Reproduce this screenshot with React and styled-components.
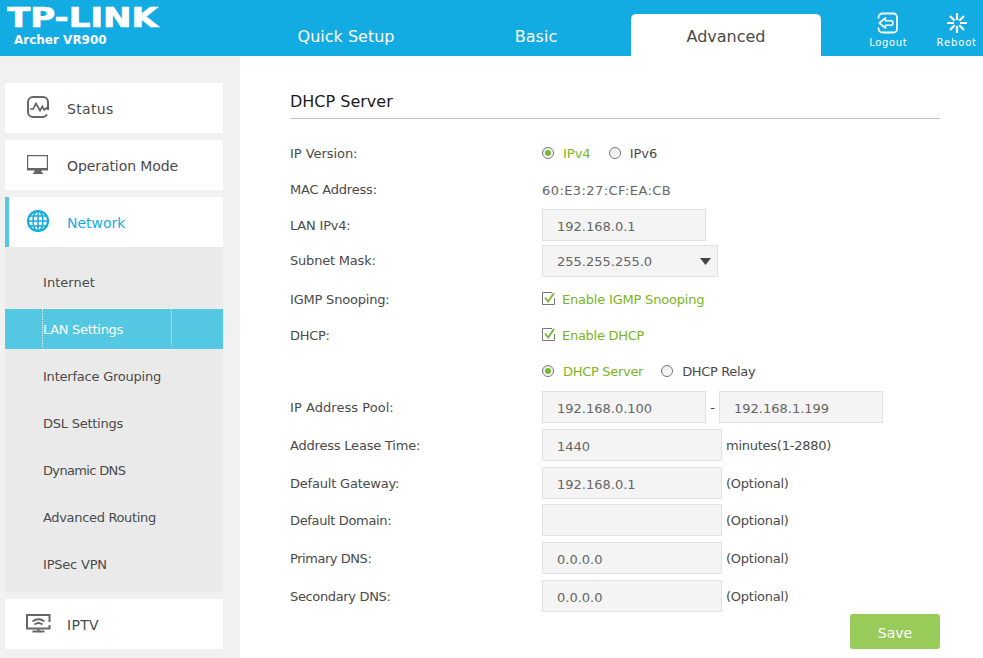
import React from "react";
import styled, { createGlobalStyle } from "styled-components";

const Global = createGlobalStyle`
  * { box-sizing: border-box; }
  body {
    margin: 0;
    background: #fff;
    color: #4a4a4a;
    font: 13px/20px Verdana, "DejaVu Sans", sans-serif;
    overflow: hidden;
  }
  svg { display: block; flex: none; }
`;

const Page = styled.div`
  width: 983px;
  height: 658px;
  display: flex;
  flex-direction: column;
  overflow: hidden;
`;

const Header = styled.header`
  height: 56px;
  flex: none;
  display: flex;
  background: #12abe2;
  color: #fff;
`;

const Brand = styled.div`
  width: 251px;
  flex: none;
  padding-left: 7px;
`;

const Model = styled.div`
  margin: -6px 0 0 7px;
  font-size: 12px;
  line-height: 20px;
  font-weight: bold;
  white-space: nowrap;
`;

const Tabs = styled.nav`
  display: flex;
  flex: none;
  align-items: flex-end;
`;

const Tab = styled.a`
  width: 190px;
  height: 42px;
  line-height: 45px;
  text-align: center;
  font-size: 16px;
  border-radius: 5px 5px 0 0;
  background: ${(p) => (p.$active ? "#fff" : "transparent")};
  color: ${(p) => (p.$active ? "#4a4a4a" : "#fff")};
`;

const Actions = styled.div`
  display: flex;
  flex: none;
  margin-left: 33px;
`;

const Action = styled.a`
  width: 68.5px;
  display: flex;
  flex-direction: column;
  align-items: center;
  padding-top: 12px;
  font-size: 10px;
  line-height: 14px;
  letter-spacing: ${(p) => p.$ls || 0}px;
  svg { margin-bottom: 2px; }
`;

const Body = styled.div`
  flex: 1;
  min-height: 0;
  display: flex;
`;

const Sidebar = styled.aside`
  width: 240px;
  flex: none;
  padding: 27px 17px 0 5px;
  display: flex;
  flex-direction: column;
  gap: 7px;
  background: #f1f1f1;
`;

const MenuItem = styled.a`
  height: 50px;
  flex: none;
  display: flex;
  align-items: center;
  padding-left: ${(p) => (p.$active ? 17 : 21)}px;
  border-left: ${(p) => (p.$active ? "4px solid #54c7e2" : "0")};
  background: #fff;
  color: ${(p) => (p.$active ? "#12abe2" : "#4a4a4a")};
  font-size: 14px;
`;

const MenuIcon = styled.span`
  width: 41px;
  height: 26px;
`;

const MenuText = styled.span`
  padding-top: 2px;
  letter-spacing: ${(p) => p.$ls || 0}px;
`;

const SubMenu = styled.div`
  margin-top: -7px;
  padding: 15px 0 8px;
  display: flex;
  flex-direction: column;
  gap: 7px;
  background: #eaeaea;
`;

const SubItem = styled.div`
  height: 40px;
  padding-left: 38px;
  background: ${(p) => (p.$active ? "#54c7e2" : "transparent")};
  color: ${(p) => (p.$active ? "#fff" : "#4a4a4a")};
`;

const SubLink = styled.a`
  display: block;
  width: 128px;
  height: 40px;
  line-height: 41px;
  white-space: nowrap;
  letter-spacing: ${(p) => p.$ls || 0}px;
  outline: ${(p) => (p.$active ? "1px dotted #fff" : "none")};
`;

const Main = styled.main`
  width: 700px;
  padding: 32px 0 0 50px;
  display: flex;
  flex-direction: column;
`;

const Title = styled.h1`
  margin: 0 0 18px;
  height: 31px;
  border-bottom: 1px solid #c4c4c4;
  color: #1c1c1c;
  font-size: 16px;
  line-height: 27px;
  font-weight: normal;
`;

const Row = styled.div`
  height: 32px;
  flex: none;
  display: flex;
  align-items: center;
  margin-bottom: ${(p) => p.$gap ?? 4}px;
`;

const Label = styled.span`
  width: 252px;
  flex: none;
  padding-top: ${(p) => p.$top ?? 2}px;
  letter-spacing: ${(p) => p.$ls ?? -0.2}px;
`;

const Value = styled.span`
  padding-top: 4px;
  color: #666;
  letter-spacing: 0.43px;
`;

const Note = styled.span`
  margin-left: 4px;
  padding-top: 2px;
  letter-spacing: -0.25px;
`;

const Dash = styled.span`
  width: 13px;
  padding-top: 2px;
  text-align: center;
`;

const Field = styled.input`
  width: ${(p) => p.$w || 180}px;
  height: 32px;
  padding: 3px 14px 0;
  border: 1px solid #e2e2e2;
  border-radius: 0;
  background: #f4f4f4;
  color: #666;
  font: inherit;
  outline: none;
`;

const Select = styled.div`
  width: 176px;
  height: 32px;
  display: flex;
  align-items: center;
  justify-content: space-between;
  padding: 1px 6px 0 14px;
  border: 1px solid #e2e2e2;
  background: #f4f4f4;
  color: #666;
`;

const Option = styled.label`
  display: flex;
  align-items: center;
  gap: ${(p) => (p.$check ? 7 : 9)}px;
  margin-right: 18px;
  color: ${(p) => (p.$on ? "#7ab51d" : "#4a4a4a")};
`;

const OptionText = styled.span`
  padding-top: 2px;
  letter-spacing: ${(p) => p.$ls || 0}px;
`;

const RadioMark = styled.span`
  width: 12px;
  height: 12px;
  display: grid;
  place-items: center;
  border: 1px solid #777;
  border-radius: 50%;
  background: linear-gradient(135deg, #e8e8e8, #fff);
  &::after {
    content: "";
    width: 6px;
    height: 6px;
    border-radius: 50%;
    background: ${(p) => (p.$on ? "#78b832" : "transparent")};
  }
`;

const Save = styled.button`
  width: 90px;
  height: 35px;
  flex: none;
  align-self: flex-end;
  margin: -4px 0 0;
  padding: 3px 0 0;
  border: 0;
  border-radius: 3px;
  background: #98cb5a;
  color: #fff;
  font: 14px Verdana, "DejaVu Sans", sans-serif;
`;

const Logo = () => (
  <svg width="164" height="36" viewBox="0 0 164 36">
    <text
      x="0"
      y="27"
      textLength="151"
      lengthAdjust="spacingAndGlyphs"
      fontFamily="DejaVu Sans"
      fontWeight="bold"
      fontSize="26"
      fill="#fff"
      stroke="#fff"
      strokeWidth="0.7"
    >
      TP-LINK
    </text>
  </svg>
);

const LogoutIcon = () => (
  <svg width="22" height="22" viewBox="0 0 22 22" fill="none" stroke="#fff" strokeWidth="1.8">
    <path d="M1.500 6.500V5.500a4 4 0 0 1 4-4h11A3.500 3.500 0 0 1 20 5v12a3.500 3.500 0 0 1-3.500 3.500h-11a4 4 0 0 1-4-4v-1" />
    <path d="M2.200 11 8.500 6v2.700h4.800a2.300 2.300 0 0 1 2.700 2.300 2.300 2.300 0 0 1-2.700 2.300H8.500V16z" strokeWidth="1.600" strokeLinejoin="round" />
  </svg>
);

const RebootIcon = () => (
  <svg width="22" height="22" viewBox="0 0 22 22" stroke="#fff" strokeWidth="2.200">
    <path d="M11 1v7M11 14v7M1 11h7M14 11h7M4 4l4.700 4.700M13.300 13.300 18 18M18 4l-4.700 4.700M8.700 13.300 4 18" />
  </svg>
);

const StatusIcon = () => (
  <svg width="24" height="24" viewBox="0 0 24 24" fill="none" stroke="#666" strokeWidth="2">
    <path d="M22 15V7a5 5 0 0 0-5-5H7a5 5 0 0 0-5 5v10a5 5 0 0 0 5 5h10a5 5 0 0 0 4-2.500" />
    <path d="M4 14h3.200L10 8.500l4 7 2.300-4 2 3.500 2.900-2.500" strokeWidth="1.700" />
  </svg>
);

const MonitorIcon = () => (
  <svg width="24" height="24" viewBox="0 0 24 24">
    <path fill="#666" fillRule="evenodd" d="M1 3h21v15.500h-6.500v2h1.500V22H7v-1.500h1.500v-2H1zm1.200 1.200V16h18.600V4.200z" />
  </svg>
);

const GlobeIcon = () => (
  <svg width="24" height="24" viewBox="0 0 24 24" fill="none" stroke="#12abe2" strokeWidth="1.500">
    <circle cx="12" cy="12" r="10" strokeWidth="2.200" />
    <ellipse cx="12" cy="12" rx="5" ry="10" />
    <path d="M12 2v20M2 12h20M4 7h16M4 17h16" />
  </svg>
);

const IptvIcon = () => (
  <svg width="25" height="24" viewBox="0 0 25 24" fill="none" stroke="#666" strokeWidth="2">
    <path d="M23.500 11V4H1v13.500h22.500v-3.500M12.500 17.500v3M6.500 20.500h12" />
    <path d="M6.500 10.500q6-4.500 12 0M8.500 13.500q4-3 8 0" strokeWidth="1.800" />
  </svg>
);

const CheckMark = () => (
  <svg width="13" height="15" viewBox="0 0 13 15" fill="none">
    <path d="M10 .5H.5v12h12V6" stroke="#777" />
    <path d="m3 5.500 3.200 4L12 1" stroke="#78b832" strokeWidth="1.900" />
  </svg>
);

const Arrow = () => (
  <svg width="11" height="7" viewBox="0 0 11 7">
    <path d="M0 0h11L5.500 7z" fill="#444" />
  </svg>
);

const Radio = ({ on, ls, children }) => (
  <Option $on={on}>
    <RadioMark $on={on} />
    <OptionText $ls={ls}>{children}</OptionText>
  </Option>
);

const Check = ({ ls, children }) => (
  <Option $on $check>
    <CheckMark />
    <OptionText $ls={ls}>{children}</OptionText>
  </Option>
);

const subItems = [
  ["Internet", 0.05],
  ["LAN Settings", -0.3],
  ["Interface Grouping", -0.22],
  ["DSL Settings", -0.25],
  ["Dynamic DNS", -0.65],
  ["Advanced Routing", -0.33],
  ["IPSec VPN", -0.2],
];

const Item = ({ icon, active, ls, children }) => (
  <MenuItem $active={active}>
    <MenuIcon>{icon}</MenuIcon>
    <MenuText $ls={ls}>{children}</MenuText>
  </MenuItem>
);

export default function App() {
  return (
    <Page>
      <Global />
      <Header>
        <Brand>
          <Logo />
          <Model>Archer VR900</Model>
        </Brand>
        <Tabs>
          <Tab>Quick Setup</Tab>
          <Tab>Basic</Tab>
          <Tab $active>Advanced</Tab>
        </Tabs>
        <Actions>
          <Action $ls={0.65}><LogoutIcon />Logout</Action>
          <Action $ls={0.85}><RebootIcon />Reboot</Action>
        </Actions>
      </Header>
      <Body>
        <Sidebar>
          <Item icon={<StatusIcon />} ls={0.35}>Status</Item>
          <Item icon={<MonitorIcon />} ls={-0.08}>Operation Mode</Item>
          <Item icon={<GlobeIcon />} active>Network</Item>
          <SubMenu>
            {subItems.map(([name, ls]) => (
              <SubItem key={name} $active={name === "LAN Settings"}>
                <SubLink $active={name === "LAN Settings"} $ls={ls}>{name}</SubLink>
              </SubItem>
            ))}
          </SubMenu>
          <Item icon={<IptvIcon />} ls={0.3}>IPTV</Item>
        </Sidebar>
        <Main>
          <Title>DHCP Server</Title>
          <Row>
            <Label $ls={-0.05}>IP Version:</Label>
            <Radio on>IPv4</Radio>
            <Radio>IPv6</Radio>
          </Row>
          <Row>
            <Label>MAC Address:</Label>
            <Value>60:E3:27:CF:EA:CB</Value>
          </Row>
          <Row>
            <Label>LAN IPv4:</Label>
            <Field $w={164} defaultValue="192.168.0.1" />
          </Row>
          <Row $gap={6}>
            <Label $top={0}>Subnet Mask:</Label>
            <Select>255.255.255.0<Arrow /></Select>
          </Row>
          <Row>
            <Label>IGMP Snooping:</Label>
            <Check ls={-0.2}>Enable IGMP Snooping</Check>
          </Row>
          <Row>
            <Label $ls={-0.3}>DHCP:</Label>
            <Check ls={-0.28}>Enable DHCP</Check>
          </Row>
          <Row>
            <Label />
            <Radio on ls={-0.3}>DHCP Server</Radio>
            <Radio ls={-0.35}>DHCP Relay</Radio>
          </Row>
          <Row $gap={6}>
            <Label $ls={0.05}>IP Address Pool:</Label>
            <Field $w={164} defaultValue="192.168.0.100" />
            <Dash>-</Dash>
            <Field $w={164} defaultValue="192.168.1.199" />
          </Row>
          <Row $gap={6}>
            <Label>Address Lease Time:</Label>
            <Field defaultValue="1440" />
            <Note>minutes(1-2880)</Note>
          </Row>
          <Row $gap={5}>
            <Label>Default Gateway:</Label>
            <Field defaultValue="192.168.0.1" />
            <Note>(Optional)</Note>
          </Row>
          <Row $gap={6}>
            <Label $ls={-0.35}>Default Domain:</Label>
            <Field defaultValue="" />
            <Note>(Optional)</Note>
          </Row>
          <Row $gap={6}>
            <Label $ls={-0.45}>Primary DNS:</Label>
            <Field defaultValue="0.0.0.0" />
            <Note>(Optional)</Note>
          </Row>
          <Row $gap={6}>
            <Label $ls={-0.35}>Secondary DNS:</Label>
            <Field defaultValue="0.0.0.0" />
            <Note>(Optional)</Note>
          </Row>
          <Save>Save</Save>
        </Main>
      </Body>
    </Page>
  );
}
